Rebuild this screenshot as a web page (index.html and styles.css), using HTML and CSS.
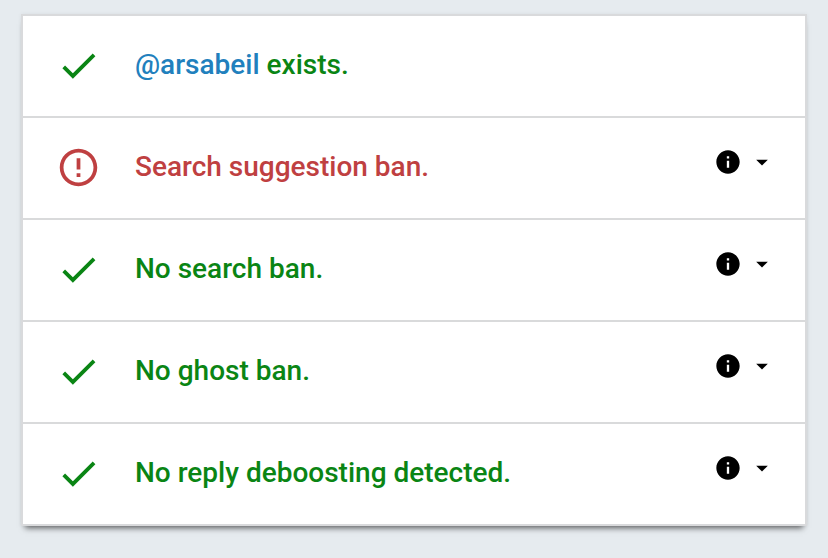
FILE: index.html
```html
<!DOCTYPE html>
<html lang="en">
<head>
<meta charset="utf-8">
<meta name="viewport" content="width=device-width, initial-scale=1">
<title>Account test results</title>
<link rel="stylesheet" href="styles.css">
</head>
<body>
<svg class="defs" aria-hidden="true">
  <symbol id="check" viewBox="0 0 24 24"><path d="M9 16.17L4.83 12l-1.42 1.41L9 19 21 7l-1.41-1.41z"/></symbol>
  <symbol id="alert" viewBox="0 0 24 24"><path d="M11 15h2v2h-2zm0-8h2v6h-2zm.99-5C6.47 2 2 6.48 2 12s4.47 10 9.99 10C17.52 22 22 17.52 22 12S17.52 2 11.99 2zM12 20c-4.42 0-8-3.58-8-8s3.58-8 8-8 8 3.58 8 8-3.58 8-8 8z"/></symbol>
  <symbol id="info" viewBox="0 0 24 24"><path d="M12 2C6.48 2 2 6.48 2 12s4.48 10 10 10 10-4.48 10-10S17.52 2 12 2zm1 15h-2v-6h2v6zm0-8h-2V7h2v2z"/></symbol>
  <symbol id="caret" viewBox="0 0 24 24"><path d="M7 10l5 5 5-5z"/></symbol>
</svg>
<main class="page">
  <ul class="results">
    <li class="result ok">
      <svg class="status" aria-hidden="true"><use href="#check"/></svg>
      <p class="text"><a href="#arsabeil">@arsabeil</a> exists.</p>
    </li>
    <li class="result bad">
      <svg class="status" aria-hidden="true"><use href="#alert"/></svg>
      <p class="text">Search suggestion ban.</p>
      <button class="more" type="button" aria-label="More about search suggestion ban"><svg><use href="#info"/></svg><svg><use href="#caret"/></svg></button>
    </li>
    <li class="result ok">
      <svg class="status" aria-hidden="true"><use href="#check"/></svg>
      <p class="text">No search ban.</p>
      <button class="more" type="button" aria-label="More about search ban"><svg><use href="#info"/></svg><svg><use href="#caret"/></svg></button>
    </li>
    <li class="result ok">
      <svg class="status" aria-hidden="true"><use href="#check"/></svg>
      <p class="text">No ghost ban.</p>
      <button class="more" type="button" aria-label="More about ghost ban"><svg><use href="#info"/></svg><svg><use href="#caret"/></svg></button>
    </li>
    <li class="result ok">
      <svg class="status" aria-hidden="true"><use href="#check"/></svg>
      <p class="text">No reply deboosting detected.</p>
      <button class="more" type="button" aria-label="More about reply deboosting"><svg><use href="#info"/></svg><svg><use href="#caret"/></svg></button>
    </li>
  </ul>
</main>
</body>
</html>
```
FILE: styles.css
```css
* { box-sizing: border-box; }
body {
  margin: 0;
  background: #e6ebef;
  font-family: Roboto, "Liberation Sans", sans-serif;
}
.defs { display: none; }
.page { padding: 14px 21px 32px; }
.results {
  margin: 0;
  padding: 0;
  list-style: none;
  background: #fff;
  border: 2px solid #d9dadc;
  box-shadow: 0 6px 6px -4px rgba(0, 0, 0, .6), 0 0 4px rgba(0, 0, 0, .06);
}
.result {
  display: flex;
  align-items: center;
  min-height: 100px;
  padding: 0 29px 0 33px;
}
.result + .result {
  min-height: 102px;
  border-top: 2px solid #d9dadb;
}
.status {
  width: 45px;
  height: 45px;
  margin-bottom: 2px;
  fill: currentColor;
}
.text {
  flex: 1;
  margin: 0 0 2px 34px;
  font-size: 28px;
  line-height: 40px;
  font-weight: 500;
}
.ok { color: #0a8514; }
.bad { color: #bf4041; }
a { color: #2180bd; text-decoration: none; }
.more {
  display: flex;
  align-items: center;
  gap: 6px;
  margin-bottom: 12px;
  padding: 0;
  border: 0;
  background: none;
  color: #000;
}
.more svg {
  width: 28px;
  height: 28px;
  fill: currentColor;
}
```
